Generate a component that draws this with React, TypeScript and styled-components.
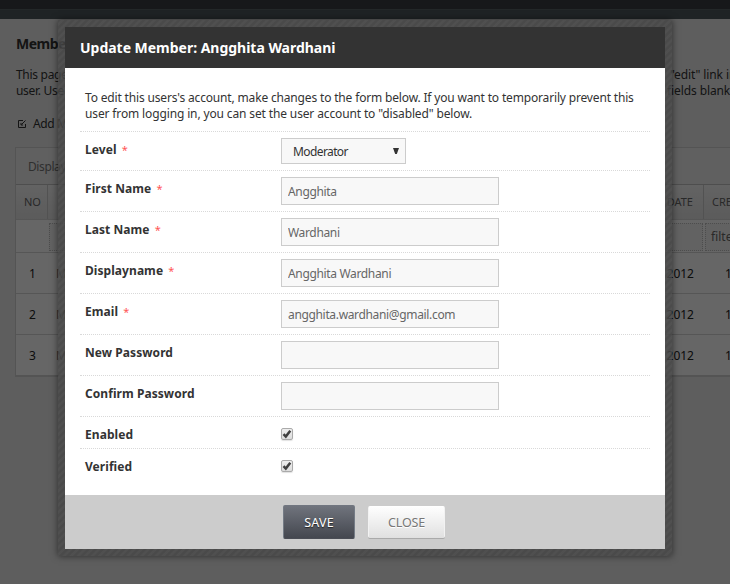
import React from "react";
import styled, { createGlobalStyle } from "styled-components";

const Global = createGlobalStyle`
  *, *::before, *::after { box-sizing: border-box; }
  html, body { margin: 0; height: 584px; overflow: hidden; background: #ebebeb; }
  body { font: 12px/16px "Noto Sans", "Open Sans", sans-serif; color: #333; }
  p, h1, h2 { margin: 0; }
`;

const Screen = styled.div`
  position: relative;
  width: 730px;
  height: 584px;
  overflow: hidden;
`;
const TopBar = styled.div`
  height: 9px;
  background: #3a3e42;
`;
const SubBar = styled.div`
  height: 10px;
  background: #4e595c;
  border-top: 1px solid #586265;
`;
const Page = styled.main`
  padding: 17px 0 0 15px;
`;
const PageTitle = styled.h1`
  font-size: 14px;
  line-height: 16px;
  padding-left: 1px;
  letter-spacing: -0.5px;
`;
const Line = styled.p`
  display: flex;
  justify-content: space-between;
  width: 716px;
  padding-left: 1px;
  white-space: nowrap;
  letter-spacing: -0.3px;
`;
const Intro = styled.div`
  margin-top: 15px;
`;
const TailText = styled.span<{ $width: number }>`
  width: ${(p) => p.$width}px;
  flex: none;
  white-space: nowrap;
  letter-spacing: -0.1px;
`;
const AddLink = styled.div`
  display: flex;
  align-items: center;
  gap: 7px;
  margin: 17px 0 15px 3px;
  height: 16px;
  letter-spacing: -0.4px;
`;
const Table = styled.section`
  width: 800px;
  border: 1px solid #d2d2d2;
  border-bottom-width: 2px;
  background: #fff;
`;
const Toolbar = styled.div`
  height: 36px;
  padding: 11px 12px;
  background: #efefef;
  color: #777;
  letter-spacing: -0.4px;
`;
const Row = styled.div<{ $kind?: "head" | "filter" }>`
  display: grid;
  grid-template-columns: 32px 656px 100px;
  height: ${(p) => (p.$kind === "head" ? 35 : p.$kind === "filter" ? 33 : 41)}px;
  border-top: 1px solid ${(p) => (p.$kind === "head" ? "#c4c4c4" : "#d8d8d8")};
  background: ${(p) => (p.$kind === "head" ? "linear-gradient(#f8f8f8, #e4e4e4)" : "#fff")};
  color: ${(p) => (p.$kind ? "#666" : "#222")};
`;
const Cell = styled.div<{ $head?: boolean }>`
  display: flex;
  align-items: center;
  justify-content: space-between;
  padding: ${(p) => (p.$head ? 0 : 2)}px 10px 0 8px;
  font-size: ${(p) => (p.$head ? 11 : 12)}px;
  border-right: ${(p) => (p.$head ? "1px solid #ccc" : "0")};
`;
const Numeric = styled(Cell)<{ $indent?: number }>`
  padding-left: ${(p) => p.$indent ?? 13}px;
`;
const Faded = styled.span`
  color: #777;
`;
const FilterBox = styled.div`
  margin: 3px 1px 3px 1px;
  padding: 5px 5px;
  border: 1px dotted #c0c0c0;
  background: #f6f6f6;
`;
const Shade = styled.div`
  position: absolute;
  inset: 0;
  background: rgba(0, 0, 0, 0.6);
`;
const Frame = styled.div`
  position: absolute;
  left: 58px;
  top: 20px;
  width: 614px;
  height: 536px;
  padding: 7px;
  background: repeating-linear-gradient(135deg, rgba(69, 69, 69, 0.8) 0 1.5px, rgba(76, 76, 76, 0.8) 2.5px 4px, rgba(69, 69, 69, 0.8) 5px);
  box-shadow: 0 0 7px rgba(0, 0, 0, 0.55);
`;
const Dialog = styled.form`
  display: flex;
  flex-direction: column;
  height: 522px;
  background: #fff;
`;
const DialogTitle = styled.h2`
  height: 41px;
  padding-left: 15px;
  background: #333;
  color: #fff;
  font-size: 14px;
  line-height: 41px;
  letter-spacing: -0.02px;
`;
const Description = styled.div`
  height: 63px;
  padding: 22px 0 0 20px;
  white-space: nowrap;
`;
const Sentence = styled.p<{ $spacing: number }>`
  letter-spacing: ${(p) => p.$spacing}px;
`;
const Fields = styled.div`
  flex: 1;
  padding: 0 15px;
`;
const Field = styled.div<{ $height: number }>`
  display: grid;
  grid-template-columns: 196px 1fr;
  align-items: start;
  height: ${(p) => p.$height}px;
  padding: 6px 0 0 5px;
  border-top: 1px dotted #d9d9d9;
`;
const Label = styled.label`
  padding-top: 4px;
  font-weight: 700;
  letter-spacing: 0.06px;
`;
const Required = styled.span`
  margin-left: 2px;
  color: #ff5555;
  font-size: 11px;
  font-weight: 400;
`;
const Input = styled.input`
  width: 218px;
  height: 28px;
  padding: 0 6px;
  border: 1px solid #ccc;
  background: #f8f8f8;
  color: #666;
  font: inherit;
  letter-spacing: -0.34px;
  outline: 0;
`;
const Select = styled.div`
  display: flex;
  align-items: center;
  justify-content: space-between;
  width: 125px;
  height: 26px;
  padding: 1px 6px 0 11px;
  border: 1px solid #ccc;
  background: #f8f8f8;
  letter-spacing: -0.6px;
`;
const Arrow = styled.svg`
  margin-bottom: 2px;
`;
const Check = styled.span`
  display: flex;
  width: 12px;
  height: 12px;
  margin-top: 5px;
  border: 1px solid #aaa;
  border-radius: 2px;
  background: linear-gradient(#eee, #ddd);
  box-shadow: 0 1px 1px rgba(0, 0, 0, 0.12);
`;
const Footer = styled.footer`
  display: flex;
  align-items: center;
  gap: 13px;
  height: 54px;
  padding-left: 218px;
  background: #ccc;
`;
const Button = styled.button<{ $primary?: boolean }>`
  width: ${(p) => (p.$primary ? 72 : 77)}px;
  height: ${(p) => (p.$primary ? 34 : 32)}px;
  padding: 2px 0 0;
  border: 1px solid;
  border-color: ${(p) => (p.$primary ? "#717680 #747b85 #4a4d55" : "#fff #f2f2f2 #e0e0e0")};
  border-radius: 2px;
  background: ${(p) => (p.$primary ? "linear-gradient(#70747d, #44474f)" : "linear-gradient(#fefefe, #e1e1e1)")};
  box-shadow: ${(p) => (p.$primary ? "none" : "0 1px 0 #aaa")};
  color: ${(p) => (p.$primary ? "#fff" : "#777")};
  font: inherit;
  font-size: 12.5px;
  letter-spacing: ${(p) => (p.$primary ? 0.2 : -0.2)}px;
  text-shadow: ${(p) => (p.$primary ? "0 1px 1px #222" : "0 1px 0 #fff")};
`;

const fields = [
  { label: "First Name", value: "Angghita", required: true },
  { label: "Last Name", value: "Wardhani", required: true },
  { label: "Displayname", value: "Angghita Wardhani", required: true },
  { label: "Email", value: "angghita.wardhani@gmail.com", required: true },
  { label: "New Password", value: "" },
  { label: "Confirm Password", value: "" },
];

const Checked = () => (
  <Check role="checkbox" aria-checked="true">
    <svg width="10" height="10" viewBox="0 0 10 10">
      <path d="M1.5 5.2 3.8 7.6 8.3 1.8" fill="none" stroke="#404040" strokeWidth="2.5" />
    </svg>
  </Check>
);

export default function App() {
  return (
    <Screen>
      <Global />
      <TopBar />
      <SubBar />
      <Page>
        <PageTitle>Members</PageTitle>
        <Intro>
          <Line>This page <TailText $width={61}>"edit" link in</TailText></Line>
          <Line>user. Use <TailText $width={64}>fields blank</TailText></Line>
        </Intro>
        <AddLink>
          <svg width="8" height="8" viewBox="0 0 8 8" fill="none" stroke="#333">
            <path d="M5 .5H.5v7h7V4M3 3v2h2M3.5 4.5 7.5.5" />
          </svg>
          Add Member
        </AddLink>
        <Table>
          <Toolbar>Displaying</Toolbar>
          <Row $kind="head">
            <Cell $head>NO</Cell>
            <Cell $head><span /><span>DATE</span></Cell>
            <Cell $head>CREATED</Cell>
          </Row>
          <Row $kind="filter">
            <span />
            <FilterBox />
            <FilterBox>filter</FilterBox>
          </Row>
          {[1, 2, 3].map((n) => (
            <Row key={n}>
              <Numeric>{n}</Numeric>
              <Cell><Faded>M</Faded><span>2012</span></Cell>
              <Numeric $indent={21}>1</Numeric>
            </Row>
          ))}
        </Table>
      </Page>
      <Shade />
      <Frame>
        <Dialog>
          <DialogTitle>Update Member: Angghita Wardhani</DialogTitle>
          <Description>
            <Sentence $spacing={-0.165}>To edit this users's account, make changes to the form below. If you want to temporarily prevent this</Sentence>
            <Sentence $spacing={-0.135}>user from logging in, you can set the user account to "disabled" below.</Sentence>
          </Description>
          <Fields>
            <Field $height={39}>
              <Label>Level <Required>*</Required></Label>
              <Select>
                Moderator
                <Arrow width="6" height="6" viewBox="0 0 6 6"><path d="M0 0h6L3.8 6H2.2z" fill="#333" /></Arrow>
              </Select>
            </Field>
            {fields.map((f) => (
              <Field key={f.label} $height={41}>
                <Label>{f.label} {f.required && <Required>*</Required>}</Label>
                <Input defaultValue={f.value} />
              </Field>
            ))}
            <Field $height={32}><Label>Enabled</Label><Checked /></Field>
            <Field $height={32}><Label>Verified</Label><Checked /></Field>
          </Fields>
          <Footer>
            <Button type="button" $primary>SAVE</Button>
            <Button type="button">CLOSE</Button>
          </Footer>
        </Dialog>
      </Frame>
    </Screen>
  );
}
